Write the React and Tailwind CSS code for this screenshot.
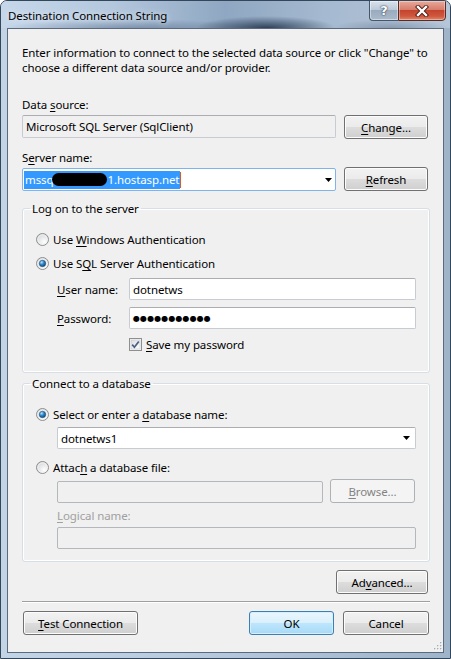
import React from "react";

const font = "font-['Noto_Sans',sans-serif] text-[11.5px] tracking-[-0.1px] leading-[15px] text-black";

const btn =
  "flex items-center justify-center h-[24px] rounded-[3px] border border-[#707070] bg-[linear-gradient(#f2f2f2,#ebebeb_50%,#dddddd_50%,#cfcfcf)] shadow-[inset_0_0_0_1px_#fcfcfc]";

const okBtn =
  "flex items-center justify-center h-[24px] rounded-[3px] border border-[#3c7fb1] bg-[linear-gradient(#eaf6fd,#d9f0fc_50%,#bee6fd_50%,#a7d9f5)] shadow-[inset_0_0_0_1px_#d6efff]";

const box = "h-[22px] rounded-[2px] border border-[#c8ccd2] border-t-[#abadb3] bg-white flex items-center";

function U({ children }) {
  return <span className="underline underline-offset-2">{children}</span>;
}

function Radio({ on, id }) {
  return (
    <svg width="13" height="13" viewBox="0 0 13 13" className="shrink-0">
      <defs>
        <radialGradient id={"rb" + id} cx="0.65" cy="0.7" r="0.8">
          <stop offset="0" stopColor="#ffffff" />
          <stop offset="1" stopColor="#cfd2d6" />
        </radialGradient>
        <radialGradient id={"rd" + id} cx="0.35" cy="0.3" r="0.8">
          <stop offset="0" stopColor="#b9e6ff" />
          <stop offset="0.45" stopColor="#2f87c8" />
          <stop offset="1" stopColor="#0d3f6b" />
        </radialGradient>
      </defs>
      <circle cx="6.5" cy="6.5" r="6" fill={"url(#rb" + id + ")"} stroke="#8d8e8f" />
      <circle cx="6.5" cy="6.5" r="4.6" fill="none" stroke="#f4f4f4" strokeWidth="0.8" />
      {on && <circle cx="6.5" cy="6.5" r="3.2" fill={"url(#rd" + id + ")"} stroke="#1d4e77" strokeWidth="0.6" />}
    </svg>
  );
}

function Check() {
  return (
    <svg width="13" height="13" viewBox="0 0 13 13" className="shrink-0">
      <defs>
        <linearGradient id="cbg" x1="0" y1="0" x2="1" y2="1">
          <stop offset="0" stopColor="#d8dbe0" />
          <stop offset="1" stopColor="#ffffff" />
        </linearGradient>
      </defs>
      <rect x="0.5" y="0.5" width="12" height="12" fill="#f6f6f6" stroke="#8e8f8f" />
      <rect x="2" y="2" width="9" height="9" fill="url(#cbg)" stroke="#c5c9cf" strokeWidth="0.6" />
      <path d="M3.2 6.6 L5.4 9.2 L9.8 3.4" fill="none" stroke="#4a5e80" strokeWidth="1.7" />
    </svg>
  );
}

function Arrow() {
  return (
    <svg width="7" height="4" viewBox="0 0 7 4" className="shrink-0">
      <polygon points="0,0 7,0 3.5,4" fill="#000" />
    </svg>
  );
}

function RadioRow({ on, id, children }) {
  return (
    <div className="flex items-center h-[15px] gap-[4px]">
      <Radio on={on} id={id} />
      <span>{children}</span>
    </div>
  );
}

export default function App() {
  return (
    <div className={"w-[451px] h-[659px] flex flex-col rounded-t-[7px] border border-[#34465a] overflow-hidden bg-[linear-gradient(90deg,#c3d4e7,#b9cbdf_40%,#a9bdd3_75%,#9fb3c9)] " + font}>
      {/* title bar */}
      <div className="h-[27px] shrink-0 flex justify-between bg-[radial-gradient(ellipse_70px_12px_at_265px_27px,rgba(28,45,70,0.85),transparent),radial-gradient(ellipse_130px_10px_at_130px_28px,rgba(60,82,112,0.45),transparent),radial-gradient(ellipse_60px_10px_at_390px_28px,rgba(70,90,115,0.4),transparent),linear-gradient(90deg,#c6d7ea,#b3c7dd_25%,#8fa7c2_50%,#a5b9d0_72%,#b5c6d9)]">
        <div className="pl-[7px] pt-[7px] [text-shadow:0_0_6px_rgba(255,255,255,0.9)]">
          Destination Connection String
        </div>
        <div className="flex -mt-px mr-[4px] h-[21px]">
          <div className="w-[29px] flex items-center justify-center rounded-bl-[4px] border border-[#46576b] border-r-0 bg-[linear-gradient(#d9e2ec,#b9c7d6_50%,#9aabbf_50%,#a9bacb)] shadow-[inset_0_0_0_1px_rgba(255,255,255,0.45)]">
            <span className="font-['DejaVu_Sans',sans-serif] text-[13px] font-bold text-white [text-shadow:0_0_1px_#2b3a4c,0_0_2px_#2b3a4c]">?</span>
          </div>
          <div className="w-[48px] flex items-center justify-center rounded-br-[4px] border border-[#5a2a24] bg-[linear-gradient(#e9a99c,#d77d6b_45%,#c4442f_50%,#d0583e_80%,#e0886a)] shadow-[inset_0_0_0_1px_rgba(255,255,255,0.35)]">
            <svg width="14" height="12" viewBox="0 0 14 12">
              <path d="M3 2 L11 10 M11 2 L3 10" stroke="#4a1a14" strokeWidth="4.2" strokeLinecap="square" />
              <path d="M3 2 L11 10 M11 2 L3 10" stroke="#ffffff" strokeWidth="2.4" strokeLinecap="square" />
            </svg>
          </div>
        </div>
      </div>

      {/* client area */}
      <div className="relative mx-[6px] h-[625px] shrink-0 border border-[#5b6a7c] bg-[#f0f0f0] pl-[14px] pt-[16px]">
        <div className="whitespace-nowrap">
          Enter information to connect to the selected data source or click "Change" to
          <br />
          choose a different data source and/or provider.
        </div>

        <div className="mt-[22px]">
          Data <U>s</U>ource:
        </div>
        <div className="mt-[3px] flex gap-[8px] items-start">
          <div className="w-[314px] h-[23px] rounded-[2px] border border-[#c8ccd2] border-t-[#abadb3] bg-[#f0f0f0] flex items-center pl-[3px]">
            Microsoft SQL Server (SqlClient)
          </div>
          <div className={btn + " w-[84px]"}>
            <span><U>C</U>hange...</span>
          </div>
        </div>

        <div className="mt-[11px]">
          S<U>e</U>rver name:
        </div>
        <div className="mt-[2px] flex gap-[8px] items-start">
          <div className="mt-[1px] w-[314px] h-[23px] rounded-[2px] border border-[#7eb4ea] bg-white flex items-center pl-[1px] pr-[3px]">
            <span className="flex items-center h-[18px] bg-[#3399ff] text-white pl-[1px] pr-[1px] whitespace-nowrap">
              mssq
              <span className="inline-block w-[55px] h-[13px] bg-black rounded-[7px] -ml-[1px]" />
              1.hostasp.net
            </span>
            <span className="w-px h-[16px] bg-[#e05a1e]" />
            <span className="flex-1" />
            <Arrow />
          </div>
          <div className={btn + " w-[84px]"}>
            <span><U>R</U>efresh</span>
          </div>
        </div>

        {/* Log on group */}
        <fieldset className="mt-[10px] w-[408px] rounded-[3px] border border-[#d5dfe5] shadow-[inset_0_0_0_1px_#ffffff] pb-[21px]">
          <legend className="ml-[7px] px-[2px]">Log on to the server</legend>
          <div className="pl-[13px]">
            <div className="mt-[16px]">
              <RadioRow id="a">Use <U>W</U>indows Authentication</RadioRow>
            </div>
            <div className="mt-[9px]">
              <RadioRow id="b" on>Use S<U>Q</U>L Server Authentication</RadioRow>
            </div>
            <div className="mt-[7px] ml-[21px] flex items-center">
              <div className="w-[72px]"><U>U</U>ser name:</div>
              <div className={box + " w-[287px] pl-[3px]"}>dotnetws</div>
            </div>
            <div className="mt-[7px] ml-[21px] flex items-center">
              <div className="w-[72px]"><U>P</U>assword:</div>
              <div className={box + " w-[287px] pl-[3px]"}>
                <span className="font-['DejaVu_Sans',sans-serif] text-[8px] tracking-[0.1px]">●●●●●●●●●●●</span>
              </div>
            </div>
            <div className="mt-[9px] ml-[93px] flex items-center h-[13px] gap-[4px]">
              <Check />
              <span><U>S</U>ave my password</span>
            </div>
          </div>
        </fieldset>

        {/* Connect to a database group */}
        <fieldset className="mt-[3px] w-[408px] rounded-[3px] border border-[#d5dfe5] shadow-[inset_0_0_0_1px_#ffffff] pb-[12px]">
          <legend className="ml-[7px] px-[2px]">Connect to a database</legend>
          <div className="pl-[13px]">
            <div className="mt-[16px]">
              <RadioRow id="c" on>Select or enter a <U>d</U>atabase name:</RadioRow>
            </div>
            <div className={box + " mt-[5px] ml-[21px] w-[359px] pl-[3px] pr-[5px]"}>
              <span className="flex-1">dotnetws1</span>
              <Arrow />
            </div>
            <div className="mt-[11px]">
              <RadioRow id="d">Attac<U>h</U> a database file:</RadioRow>
            </div>
            <div className="mt-[4px] ml-[21px] flex items-start gap-[7px]">
              <div className="mt-[2px] w-[266px] h-[22px] rounded-[2px] border border-[#b4b7bb] bg-[#f0f0f0]" />
              <div className="w-[85px] h-[24px] rounded-[3px] border border-[#adb2b5] bg-[#f4f4f4] flex items-center justify-center text-[#838383]">
                <span><U>B</U>rowse...</span>
              </div>
            </div>
            <div className="mt-[5px] ml-[21px] text-[#a0a0a0]">
              <U>L</U>ogical name:
            </div>
            <div className="mt-[4px] ml-[21px] w-[359px] h-[22px] rounded-[2px] border border-[#b4b7bb] bg-[#f0f0f0]" />
          </div>
        </fieldset>

        <div className="mt-[8px] w-[406px] flex justify-end">
          <div className={btn + " w-[92px]"}>
            <span>Ad<U>v</U>anced...</span>
          </div>
        </div>

        <div className="mt-[7px] w-[408px] border-t border-t-[#a0a0a0] border-b border-b-white" />

        <div className="mt-[8px] w-[407px] flex items-start">
          <div className={btn + " ml-[1px] w-[115px]"}>
            <span><U>T</U>est Connection</span>
          </div>
          <div className="flex-1" />
          <div className={okBtn + " w-[85px]"}>OK</div>
          <div className={btn + " ml-[9px] w-[86px]"}>Cancel</div>
        </div>

        <svg width="10" height="10" viewBox="0 0 10 10" className="absolute right-[1px] bottom-[2px]">
          {[[8, 2], [8, 5], [5, 5], [8, 8], [5, 8], [2, 8]].map(([x, y], i) => (
            <g key={i}>
              <rect x={x + 0.6} y={y + 0.6} width="1.4" height="1.4" fill="#ffffff" />
              <rect x={x} y={y} width="1.4" height="1.4" fill="#a8adb3" />
            </g>
          ))}
        </svg>
      </div>
    </div>
  );
}
